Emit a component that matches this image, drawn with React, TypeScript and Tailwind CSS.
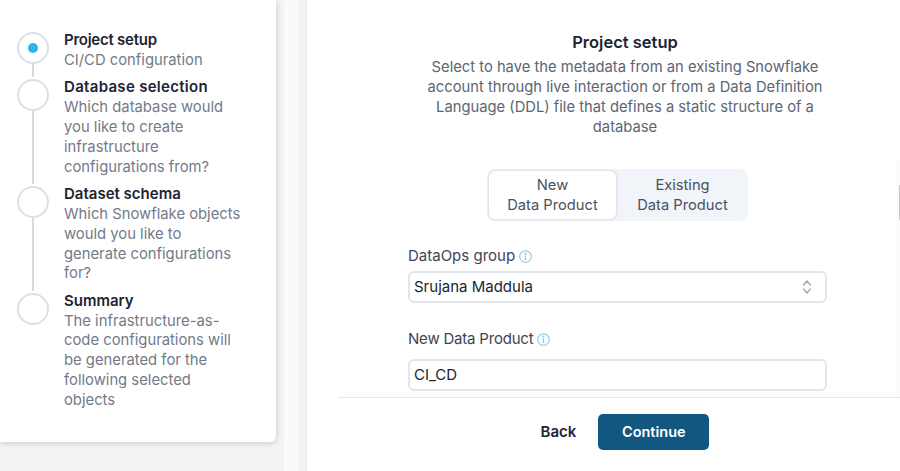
const font = { fontFamily: "Inter" };

function Step({ title, lines, active, last, titleClass }: { title: string; lines: string[]; active?: boolean; last?: boolean; titleClass: string }) {
  return (
    <div className="flex">
      <div className="flex flex-col items-center w-[32px] mr-[15.5px] ml-[16.5px]">
        <div className="mt-[2px] w-[32px] h-[32px] rounded-full border-2 border-[#dce0e6] flex items-center justify-center shrink-0 bg-white">
          {active && <div className="w-[10px] h-[10px] rounded-full bg-[#29b5ee]" />}
        </div>
        {!last && <div className="w-[2px] flex-1 bg-[#d5dae1]" />}
      </div>
      <div className="pb-[6.5px] w-[190px]">
        <div className={`pb-[1px] text-[15px] leading-[20px] font-semibold text-[#1d2433] ${titleClass}`}>{title}</div>
        {lines.map((l) => (
          <div key={l} className="text-[14.8px] leading-[19.8px] text-[#737a88] whitespace-nowrap">{l}</div>
        ))}
      </div>
    </div>
  );
}

function Info() {
  return (
    <svg width="13" height="13" viewBox="0 0 13 13" fill="none" stroke="#7fcbf7" strokeWidth="1.1" className="ml-[4px] mt-[1px]">
      <circle cx="6.5" cy="6.5" r="5.8" />
      <path d="M6.5 5.6v3.8M5.5 9.5h2M5.6 5.7h1" />
      <circle cx="6.5" cy="3.6" r="0.5" fill="#7fcbf7" />
    </svg>
  );
}

export default function App() {
  return (
    <div style={font} className="w-[900px] h-[471px] overflow-hidden flex bg-[#f3f3f4]">
      <div className="w-[276px] h-[442px] bg-white rounded-br-[6px] shadow-[0_1px_6px_rgba(0,0,0,0.18)] shrink-0 pt-[30px]">
        <Step active title="Project setup" titleClass="tracking-[-0.25px]" lines={["CI/CD configuration"]} />
        <Step title="Database selection" titleClass="tracking-[0.3px]" lines={["Which database would", "you like to create", "infrastructure", "configurations from?"]} />
        <Step title="Dataset schema" titleClass="tracking-[0px]" lines={["Which Snowflake objects", "would you like to", "generate configurations", "for?"]} />
        <Step last title="Summary" titleClass="tracking-[0px]" lines={["The infrastructure-as-", "code configurations will", "be generated for the", "following selected", "objects"]} />
      </div>
      <div className="w-[8px] shrink-0" />
      <div className="w-[15px] shrink-0 bg-[#fafafa]" />
      <div className="w-[8px] shrink-0" />
      <div className="relative flex-1 bg-white flex flex-col shadow-[0_0_3px_rgba(0,0,0,0.08)]">
        <div className="absolute right-0 top-[160px] h-[237px] w-[4px] bg-[#fcfcfc]">
          <div className="absolute right-0 top-[25px] h-[35px] w-[1.5px] bg-[#c4c4c4]" />
        </div>
        <div className="h-[398px] w-[593px] border-b border-[#e5e7eb] flex flex-col items-center ml-[31px] mr-[-31px] shrink-0">
          <h1 className="mt-[30.5px] text-[16.5px] leading-[22px] font-semibold text-[#1d2433] ml-[-19px]">Project setup</h1>
          <div className="mt-[4.5px] w-[440px] ml-[-19px] text-center text-[14.75px] leading-[20px] text-[#5d6472]">
            <div>Select to have the metadata from an existing Snowflake</div>
            <div>account through live interaction or from a Data Definition</div>
            <div>Language (DDL) file that defines a static structure of a</div>
            <div>database</div>
          </div>
          <div className="mt-[32px] w-[261px] h-[52px] rounded-[8px] bg-[#f1f4f9] flex ml-[-34px] p-[2px] text-[14.7px] leading-[20px] text-[#4a5160] text-center">
            <div className="w-[127px] bg-white rounded-[6px] shadow-[0_0_3px_rgba(0,0,0,0.2)] py-[4px]">New<br />Data Product</div>
            <div className="flex-1 py-[4px] pl-[3px]">Existing<br />Data Product</div>
          </div>
          <div className="w-[419px] self-start ml-[70px] mt-[25px]">
            <div className="flex items-center text-[15px] leading-[20px] text-[#3e4553]">DataOps group<Info /></div>
            <div className="mt-[5px] h-[32px] rounded-[6px] border-2 border-[#e2e5ea] flex items-center justify-between pl-[4px] pr-[13px] text-[15px] text-[#22262e]">
              Srujana Maddula
              <svg width="10" height="14" viewBox="0 0 10 14" fill="none" stroke="#9aa1ac" strokeWidth="1.2" strokeLinecap="round" strokeLinejoin="round">
                <path d="M1.5 5l3.5-4 3.5 4M1.5 9l3.5 4 3.5-4" />
              </svg>
            </div>
            <div className="flex items-center mt-[26px] text-[15px] leading-[20px] text-[#3e4553] tracking-[-0.2px]">New Data Product<Info /></div>
            <div className="mt-[10px] h-[32px] rounded-[6px] border-2 border-[#e2e5ea] flex items-center pl-[4px] text-[15px] text-[#22262e]">CI_CD</div>
          </div>
        </div>
        <div className="flex items-center ml-[233.5px] mt-[16px]">
          <span className="text-[15px] font-semibold text-[#1d2433]">Back</span>
          <div className="ml-[22px] w-[111px] h-[36px] rounded-[5px] bg-[#11577f] text-white text-[14.5px] font-semibold flex items-center justify-center">Continue</div>
        </div>
      </div>
    </div>
  );
}
